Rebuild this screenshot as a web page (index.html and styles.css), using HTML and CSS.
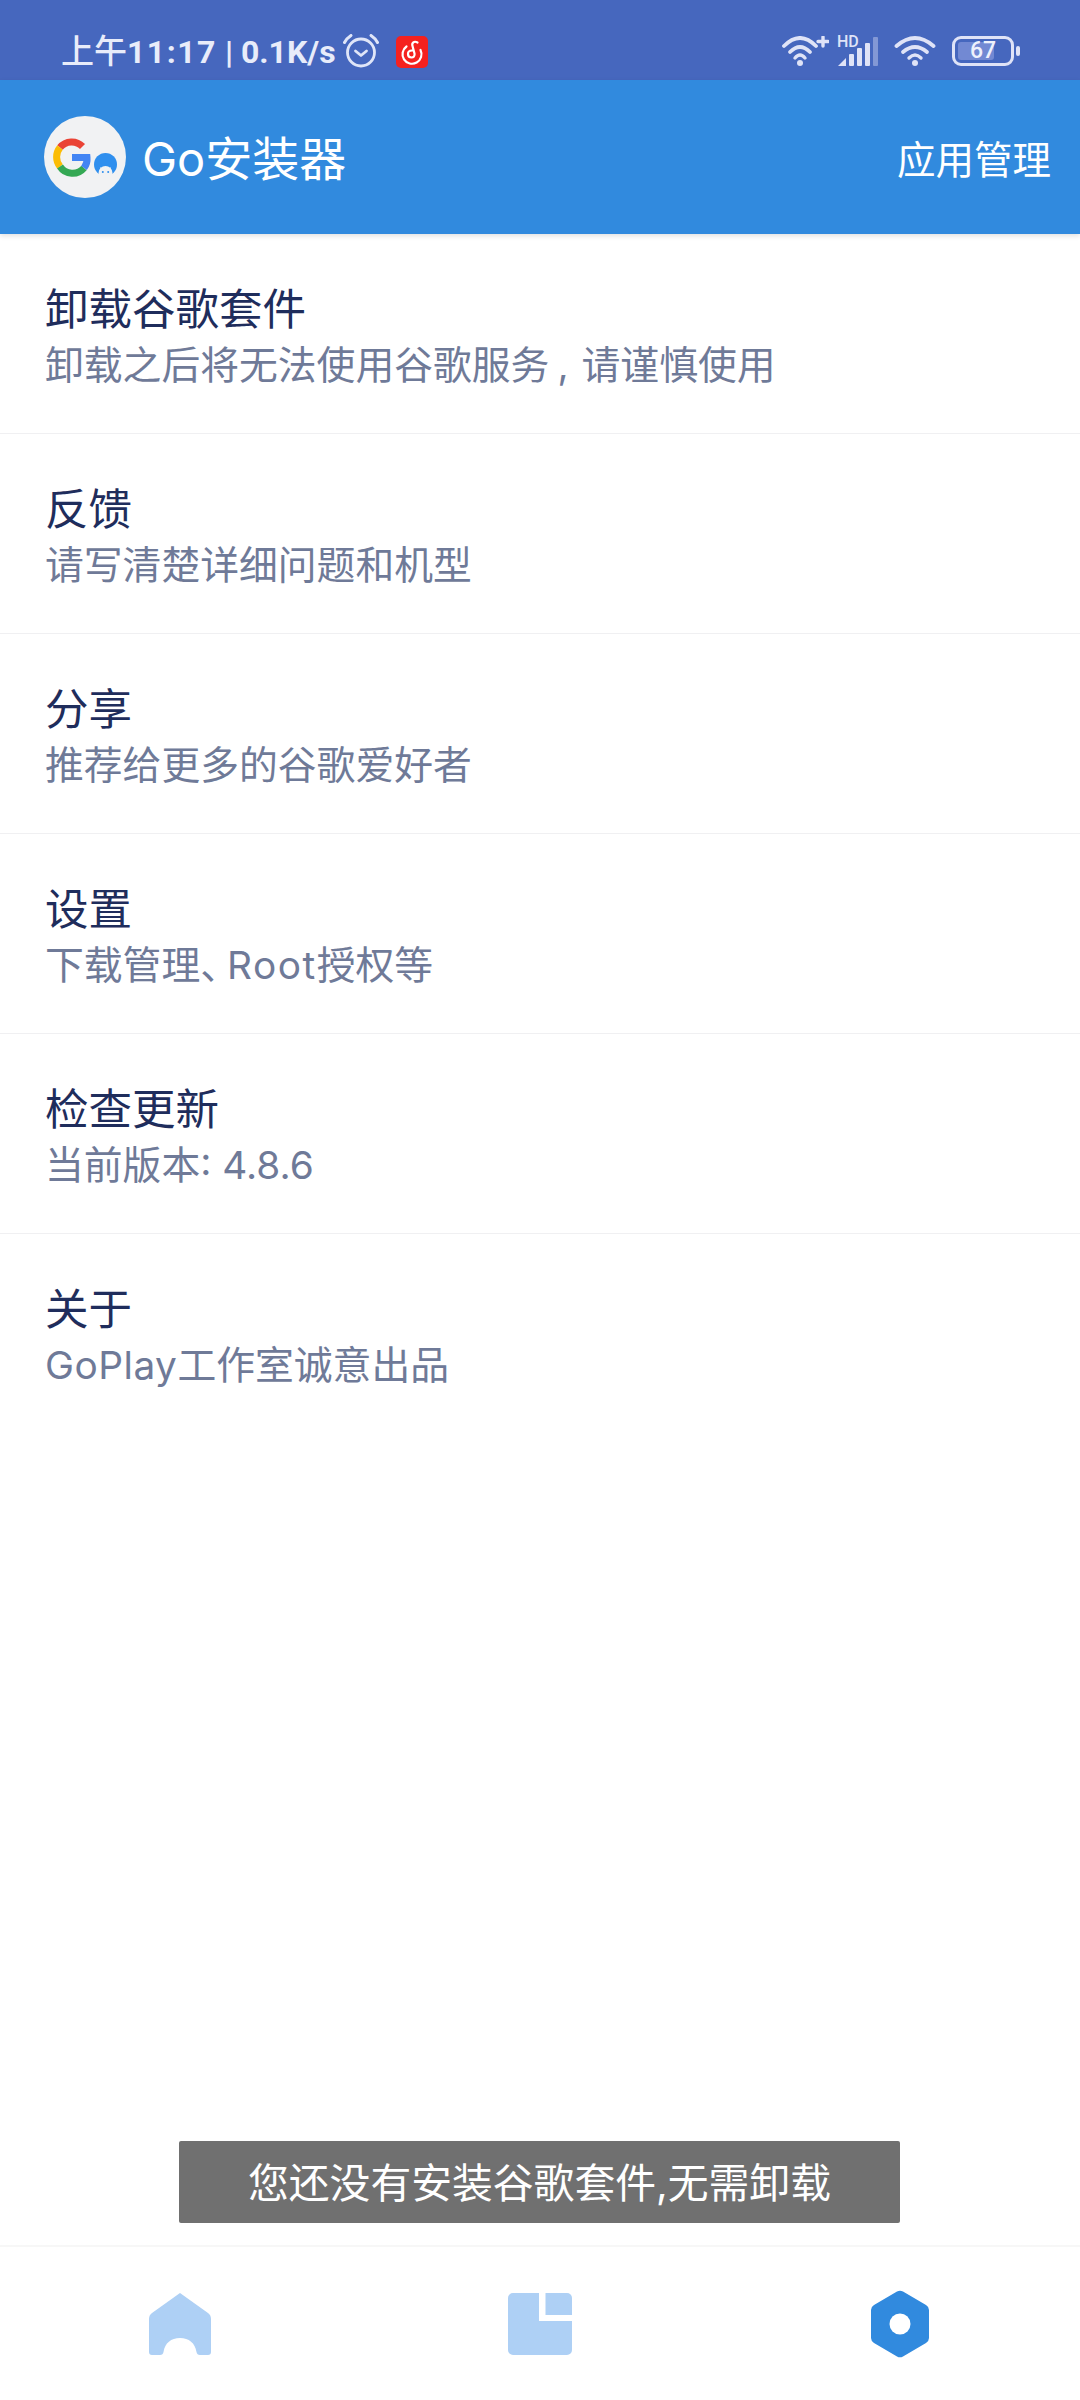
FILE: index.html
```html
<!DOCTYPE html>
<html lang="zh-CN">
<head>
  <meta charset="UTF-8">
  <title>Go安装器</title>
  <meta name="viewport" content="width=device-width, initial-scale=1.0">
  <link rel="stylesheet" href="styles.css">
</head>
<body>

  <div class="statusbar">
    <div class="status-left">
      <span class="clock"><span class="clock-am">上午</span><span class="clock-time">11:17</span> | 0.1K/s</span>
      <svg class="ic-alarm" width="36" height="34" viewBox="0 0 36 34" fill="none" stroke="#dfe5f8" stroke-linecap="round" stroke-linejoin="round">
        <circle cx="18" cy="18.500" r="13.500" stroke-width="2.800"/>
        <path d="M12.500 17l5.500 4.500 5.500-4.500" stroke-width="2.800"/>
        <path d="M1.500 8.500C3 5.500 5 3.500 8 1.500M34.500 8.500C33 5.500 31 3.500 28 1.500" stroke-width="3"/>
      </svg>
      <svg class="ic-music" width="32" height="32" viewBox="0 0 32 32" fill="none">
        <rect width="32" height="32" rx="5" fill="#f5211f"/>
        <path d="M21.500 6.500C18 4.500 15.500 7 16.500 10L18.500 17.500C19 20 17.500 21.500 15.500 21.500C13.500 21.500 12 20 12 18C12 16 13.500 14.500 16 14.500" stroke="#fff" stroke-width="2.200" stroke-linecap="round"/>
        <path d="M10.500 10.500A9.500 9.500 0 1 0 24.500 14" stroke="#fff" stroke-width="2.200" stroke-linecap="round"/>
      </svg>
    </div>
    <div class="status-right">
      <svg class="ic-wifi-plus" width="47" height="30" viewBox="0 0 47 30" fill="none" stroke="#dfe3f7" stroke-linecap="round">
        <path d="M2 10Q18-6 34 10" stroke-width="3.800"/>
        <path d="M8 16Q18 6 28 16" stroke-width="3.800"/>
        <path d="M13 22Q18 16 23 22" stroke-width="3.400"/>
        <circle cx="18" cy="27" r="3" fill="#dfe3f7" stroke="none"/>
        <path d="M41 1v9M36 5.500h10" stroke-width="3.400"/>
      </svg>
      <div class="signal">
        <span class="hd">HD</span>
        <svg width="42" height="30" viewBox="0 0 42 30" fill="#dfe3f7">
          <path d="M2 30l8-8v8z"/>
          <rect x="13" y="18" width="5" height="12" rx="1"/>
          <rect x="21" y="12" width="5" height="18" rx="1"/>
          <rect x="29" y="7" width="5" height="23" rx="1"/>
          <rect x="37" y="1" width="5" height="29" rx="1" opacity=".4"/>
        </svg>
      </div>
      <svg class="ic-wifi" width="42" height="30" viewBox="0 0 42 30" fill="none" stroke="#dfe3f7" stroke-linecap="round">
        <path d="M2.500 10Q21-6 39.500 10" stroke-width="3.800"/>
        <path d="M9 16Q21 6 33 16" stroke-width="3.800"/>
        <path d="M15 22Q21 16 27 22" stroke-width="3.400"/>
        <circle cx="21" cy="27" r="3" fill="#dfe3f7" stroke="none"/>
      </svg>
      <div class="battery">
        <div class="battery-body">
          <span class="battery-fill"></span>
          <span class="battery-num">67</span>
        </div>
        <span class="battery-cap"></span>
      </div>
    </div>
  </div>

  <div class="appbar">
    <div class="brand">
      <svg class="logo" width="82" height="82" viewBox="0 0 82 82">
        <circle cx="41" cy="41" r="41" fill="#f1f2f3"/>
        <g fill="none" stroke-width="7">
          <path d="M38.500 30.500A15 15 0 0 0 16 31.500" stroke="#ea4335"/>
          <path d="M16 31.500a15 15 0 0 0 0 19" stroke="#fbbc05"/>
          <path d="M16 50.500A15 15 0 0 0 40 52" stroke="#34a853"/>
          <path d="M40 52A15 15 0 0 0 43 41.500H28" stroke="#4285f4"/>
        </g>
        <circle cx="61.500" cy="48.500" r="11.500" fill="#2f8fee"/>
        <path d="M54.500 61v-4a7 7 0 0 1 14 0v4z" fill="#f1f2f3"/>
        <path d="M56.500 51.500l1.500 2M66.500 51.500l-1.500 2" stroke="#f1f2f3" stroke-width="1.200"/>
        <circle cx="58.800" cy="56" r="1" fill="#2f8fee"/>
        <circle cx="64.200" cy="56" r="1" fill="#2f8fee"/>
      </svg>
      <span class="brand-name">Go安装器</span>
    </div>
    <span class="appbar-action">应用管理</span>
  </div>

  <div class="list">
    <div class="row">
      <div class="row-title">卸载谷歌套件</div>
      <div class="row-sub">卸载之后将无法使用谷歌服务<span class="comma">,</span>请谨慎使用</div>
    </div>
    <div class="row">
      <div class="row-title">反馈</div>
      <div class="row-sub">请写清楚详细问题和机型</div>
    </div>
    <div class="row">
      <div class="row-title">分享</div>
      <div class="row-sub">推荐给更多的谷歌爱好者</div>
    </div>
    <div class="row">
      <div class="row-title">设置</div>
      <div class="row-sub">下载管理<span class="dun">、</span><span class="latin">Root</span>授权等</div>
    </div>
    <div class="row">
      <div class="row-title">检查更新</div>
      <div class="row-sub">当前版本: 4.8.6</div>
    </div>
    <div class="row row-last">
      <div class="row-title">关于</div>
      <div class="row-sub"><span class="studio">GoPlay</span>工作室诚意出品</div>
    </div>
  </div>

  <div class="toast">您还没有安装谷歌套件,无需卸载</div>

  <div class="tabbar">
    <div class="tab">
      <svg width="64" height="62" viewBox="0 0 64 62" fill="#aed0f5">
        <path d="M32 0L60 20Q63 22 63 26V59Q63 62 60 62H52Q49 62 48.500 59C47 50 41 45 32 45C23 45 17 50 15.500 59Q15 62 12 62H4Q1 62 1 59V26Q1 22 4 20Z"/>
      </svg>
    </div>
    <div class="tab">
      <svg width="64" height="62" viewBox="0 0 64 62" fill="#aed0f5">
        <path d="M5 0H31V28H64V57a5 5 0 0 1-5 5H5a5 5 0 0 1-5-5V5a5 5 0 0 1 5-5z"/>
        <path d="M37.500 0H59a5 5 0 0 1 5 5V22H37.500z"/>
      </svg>
    </div>
    <div class="tab">
      <svg width="60" height="68" viewBox="0 0 60 68">
        <path d="M27 1.500a6 6 0 0 1 6 0l23 13.500a6 6 0 0 1 3 5v28a6 6 0 0 1-3 5L33 66.500a6 6 0 0 1-6 0L4 53a6 6 0 0 1-3-5V20a6 6 0 0 1 3-5z" fill="#318ade"/>
        <circle cx="30" cy="34" r="10.500" fill="#fff"/>
      </svg>
    </div>
  </div>

</body>
</html>
```

FILE: styles.css
```css
* {
  box-sizing: border-box;
}

body {
  margin: 0;
  width: 1080px;
  height: 2400px;
  position: relative;
  display: flex;
  flex-direction: column;
  background: #ffffff;
  font-family: "Inter", "Noto Sans CJK SC", sans-serif;
  overflow: hidden;
}

.statusbar {
  height: 80px;
  padding: 32px 60px 0 61px;
  background: #4667be;
  display: flex;
  justify-content: space-between;
  align-items: flex-start;
}

.status-left {
  display: flex;
  align-items: center;
  height: 38px;
}

.clock {
  padding-top: 2px;
  font-family: "Roboto", "Noto Sans CJK SC", sans-serif;
  font-size: 32px;
  font-weight: 700;
  line-height: 36px;
  color: #e8ecfa;
  white-space: nowrap;
}

.clock-am {
  font-size: 33px;
  font-weight: 500;
}

.clock-time {
  letter-spacing: 1.500px;
}

.ic-alarm {
  margin-left: 7px;
}

.ic-music {
  margin-left: 17px;
  margin-top: 2px;
}

.status-right {
  display: flex;
  align-items: center;
  height: 38px;
}

.signal {
  position: relative;
  margin-left: 7px;
  width: 42px;
  height: 30px;
}

.hd {
  position: absolute;
  left: 1px;
  top: 0;
  font-family: "Roboto", sans-serif;
  font-size: 16px;
  font-weight: 500;
  line-height: 12px;
  color: #dfe3f7;
}

.ic-wifi {
  margin-left: 16px;
}

.battery {
  margin-left: 16px;
  display: flex;
  align-items: center;
}

.battery-body {
  position: relative;
  width: 62px;
  height: 30px;
  border: 3.500px solid #dfe3f7;
  border-radius: 9px;
  display: flex;
  align-items: center;
  justify-content: center;
}

.battery-fill {
  position: absolute;
  left: 3px;
  top: 3px;
  bottom: 3px;
  width: 36px;
  background: #7289d3;
  border-radius: 3px;
}

.battery-num {
  position: relative;
  font-family: "Roboto", sans-serif;
  font-size: 23px;
  font-weight: 500;
  line-height: 24px;
  color: #eef1fc;
}

.battery-cap {
  margin-left: 2px;
  width: 4px;
  height: 10px;
  background: #dfe3f7;
  border-radius: 2px;
}

.appbar {
  height: 154px;
  padding: 0 29px 0 44px;
  background: #318ade;
  color: #ffffff;
  display: flex;
  justify-content: space-between;
  align-items: center;
  box-shadow: 0 2px 5px rgba(0,0,0,0.12);
  position: relative;
}

.brand {
  display: flex;
  align-items: center;
}

.brand-name {
  margin-left: 16px;
  padding-bottom: 3px;
  font-size: 47px;
}

.appbar-action {
  font-size: 38.500px;
}

.list {
  flex: 1;
}

.row {
  height: 200px;
  padding: 51px 45px 0;
  border-bottom: 1px solid #f0f0f2;
}

.row-last {
  border-bottom: none;
}

.row-title {
  font-size: 43.500px;
  line-height: 48px;
  color: #1f2d5c;
}

.row-sub {
  margin-top: 8px;
  font-size: 38.800px;
  line-height: 48px;
  color: #6f7a98;
}

.comma {
  margin: 0 13px 0 8px;
}

.dun {
  letter-spacing: -12px;
}

.latin {
  letter-spacing: 1.500px;
}

.studio {
  letter-spacing: 0.500px;
}

.toast {
  position: absolute;
  left: 179px;
  top: 2141px;
  width: 721px;
  height: 82px;
  background: #707070;
  border-radius: 2px;
  color: #ffffff;
  font-size: 40.800px;
  line-height: 84px;
  text-align: center;
}

.tabbar {
  height: 155px;
  border-top: 2px solid #f7f7f7;
  display: grid;
  grid-template-columns: repeat(3, 1fr);
}

.tab {
  display: flex;
  justify-content: center;
  align-items: center;
}
```
